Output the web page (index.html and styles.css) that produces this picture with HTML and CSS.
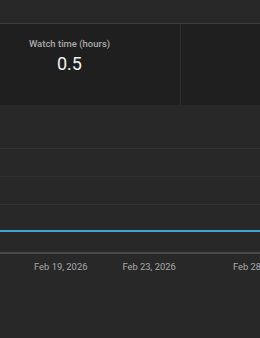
FILE: index.html
```html
<!DOCTYPE html>
<html lang="en">
<head>
    <title>Channel analytics</title>
    <link rel="stylesheet" href="styles.css">
</head>
<body>
    <div class="topbar"></div>

    <!-- Metric cards -->
    <div class="cards">
        <div class="card">
            <div class="card-label">Watch time (hours)</div>
            <div class="card-value">0.5</div>
        </div>
        <div class="card"></div>
    </div>

    <!-- Chart -->
    <div class="chart">
        <div class="plot">
            <div class="gridline"></div>
            <div class="gridline"></div>
            <div class="gridline short"></div>
            <div class="series"></div>
        </div>
        <div class="axis"></div>
        <div class="labels">
            <span class="tick first">Feb 19, 2026</span>
            <span class="tick second">Feb 23, 2026</span>
            <span class="tick third">Feb 28, 2026</span>
        </div>
    </div>
</body>
</html>
```

FILE: styles.css
```css
/* dark analytics panel */
body {
    margin: 0;
    width: 260px;
    height: 338px;
    overflow: hidden;
    background-color: #282828;
    font-family: Roboto, "Liberation Sans", Arial, sans-serif;
}

.topbar {
    height: 23px;
    background-color: #282828;
    border-bottom: 1px solid #3c3c3c;
}

.cards {
    display: flex;
    margin-left: -41px;
    height: 81px;
    background-color: #1f1f1f;
}

.card {
    flex: 0 0 222px;
    border-right: 1px solid #2e2e2e;
    text-align: center;
    padding-top: 13px;
    box-sizing: border-box;
}

.card-label {
    font-size: 9.5px;
    font-weight: 500;
    color: #aaaaaa;
    line-height: 13px;
}

.card-value {
    font-size: 18px;
    color: #f1f1f1;
    line-height: 22px;
    margin-top: 3px;
}

.chart {
    background-color: #282828;
}

.plot {
    padding-top: 43px;
}

.gridline {
    height: 27px;
    border-top: 1px solid #313131;
}

.gridline.short {
    height: 25px;
}

.series {
    height: 2px;
    background-color: #3ea6d3;
}

.axis {
    margin-top: 20px;
    height: 2px;
    background-color: #4a4a4a;
}

.labels {
    display: flex;
    padding-top: 6px;
    font-size: 9.4px;
    line-height: 13px;
    color: #aaaaaa;
    white-space: nowrap;
}

.tick.first {
    margin-left: 34px;
}

.tick.second {
    margin-left: 35px;
}

.tick.third {
    margin-left: 57px;
}
```
